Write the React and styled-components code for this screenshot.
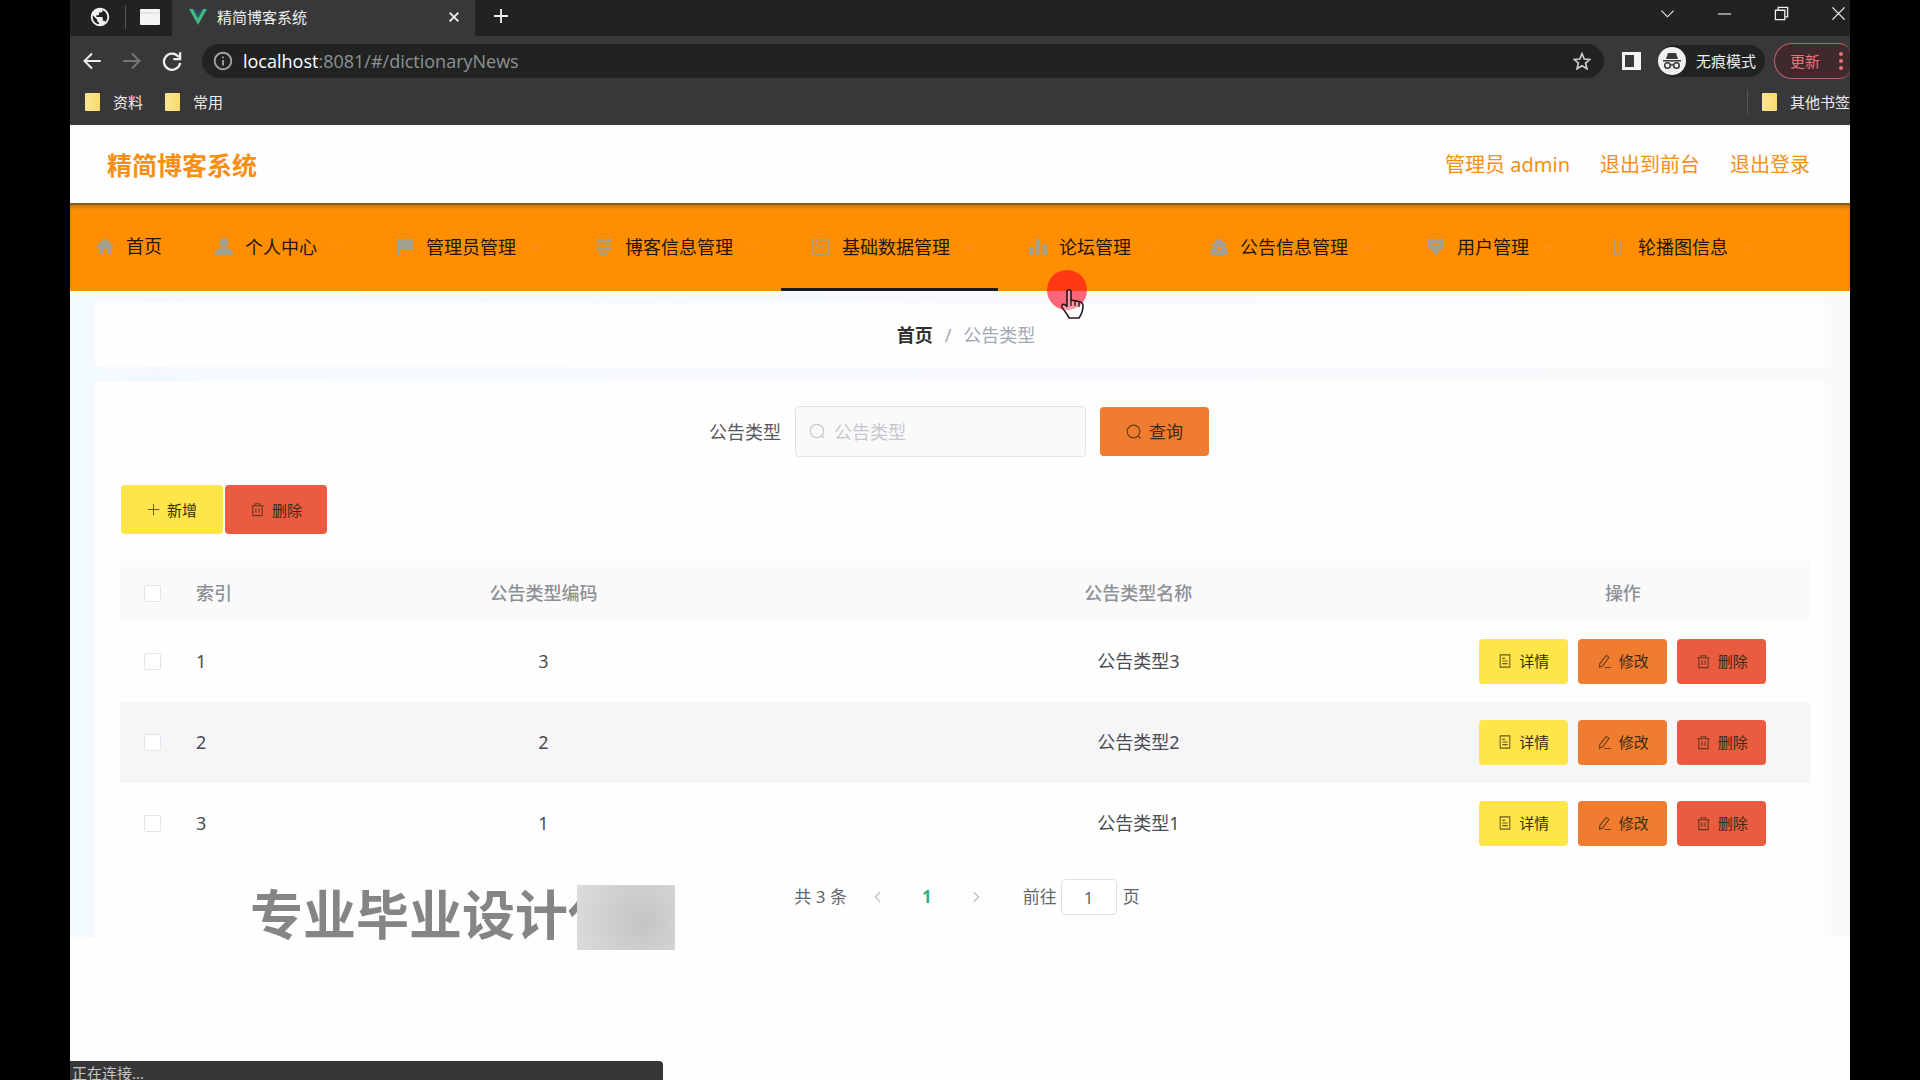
import styled, { createGlobalStyle, css } from 'styled-components'
import { MdPublic, MdInfoOutline } from 'react-icons/md'

const GlobalStyle = createGlobalStyle`
* {
  box-sizing: border-box;
}
body {
  margin: 0;
  background: #000;
  color: #303133;
  font-family: "Noto Sans", "Noto Sans CJK SC", sans-serif;
  font-size: 18px;
  line-height: 24px;
}
button, input {
  font: inherit;
  color: inherit;
}
button {
  border: none;
  padding: 0;
  background: none;
  cursor: pointer;
}
a {
  color: inherit;
  text-decoration: none;
}
`
const Screen = styled.div`
  position: relative;
  display: flex;
  flex-direction: column;
  min-height: 100vh;
  margin: 0 70px;
  overflow: hidden;
  background: #fefefe;
`

/* browser chrome */
const TabStrip = styled.div`
  display: flex;
  height: 36px;
  background: #202322;
`
const PinnedTabs = styled.div`
  display: flex;
  align-items: center;
  gap: 14px;
  width: 102px;
  padding: 0 0 3px 19px;
`
const Divider = styled.span`
  width: 1px;
  height: 24px;
  background: #55585a;
`
const Tab = styled.div`
  display: flex;
  align-items: center;
  gap: 10px;
  width: 303px;
  padding: 0 14px 2px 17px;
  background: #38383a;
  color: #eee;
  font-size: 15px;
`
const TabTitle = styled.span`
  flex: 1;
`
const IconButton = styled.button`
  display: flex;
  align-items: center;
  justify-content: center;
  color: ${({ $color }) => $color || '#eee'};
`
const NewTab = styled(IconButton)`
  width: 52px;
  height: 32px;
`
const WindowButtons = styled.div`
  display: flex;
  align-items: center;
  gap: 42px;
  height: 26px;
  margin-left: auto;
  padding-right: 4px;
`
const Toolbar = styled.div`
  display: flex;
  align-items: center;
  height: 50px;
  padding-left: 12px;
  background: #38383a;
`
const NavButtons = styled.div`
  display: flex;
  gap: 20px;
  width: 120px;
`
const AddressBar = styled.div`
  display: flex;
  flex: 1;
  align-items: center;
  gap: 9px;
  height: 34px;
  padding: 0 13px 0 10px;
  border-radius: 17px;
  background: #202322;
  color: #a2a4a5;
`
const Url = styled.span`
  flex: 1;
  color: #8f9192;
  font-family: "Open Sans", sans-serif;
`
const Host = styled.span`
  color: #fff;
`
const ToolbarEnd = styled.div`
  display: flex;
  align-items: center;
  padding-left: 18px;
`
const Incognito = styled.div`
  display: flex;
  align-items: center;
  gap: 10px;
  height: 32px;
  margin: 0 9px 0 17px;
  padding-right: 9px;
  border-radius: 16px;
  background: #202322;
  color: #eee;
  font-size: 15px;
`
const Update = styled.button`
  display: flex;
  align-items: center;
  justify-content: space-between;
  width: 76px;
  height: 36px;
  padding: 0 7px 0 15px;
  border: 1px solid #c0606c;
  border-right: none;
  border-radius: 18px 10px 10px 18px;
  background: #40292c;
  color: #e8717c;
  font-size: 15px;
`
const Bookmarks = styled.div`
  display: flex;
  align-items: center;
  gap: 22px;
  height: 39px;
  padding: 0 0 8px 15px;
  background: #38373a;
  color: #eee;
  font-size: 15px;
`
const Bookmark = styled.a`
  display: flex;
  align-items: center;
  gap: 13px;
`
const OtherBookmarks = styled.div`
  display: flex;
  align-items: center;
  gap: 14px;
  margin-left: auto;
`
const Folder = styled.span`
  width: 15px;
  height: 18px;
  border-radius: 1px;
  background: linear-gradient(90deg, #fbe594, #fadb6c);
`

/* admin page */
const Header = styled.header`
  display: flex;
  align-items: center;
  justify-content: space-between;
  height: 78px;
  padding: 2px 40px 0 37px;
  background: #fefdff;
  color: #f68f14;
`
const Brand = styled.h1`
  margin: 0;
  font-size: 25px;
  font-weight: 700;
  line-height: 36px;
`
const Account = styled.div`
  display: flex;
  gap: 30px;
  font-size: 20px;
`
const Menu = styled.nav`
  display: flex;
  height: 88px;
  background: #ff8f00;
  box-shadow: inset 0 2px 1px #8a5a12, inset 0 6px 5px -2px #c07a18;
  color: #241503;
  white-space: nowrap;
`
const MenuItem = styled.a`
  display: flex;
  align-items: center;
  gap: 12px;
  padding: ${({ $plain }) => ($plain ? '0 22px 0 26px' : '2px 22px 0 31px')};
  border-bottom: 3px solid ${({ $active }) => ($active ? '#1b1b22' : 'transparent')};

  svg {
    flex: none;
  }
`
const Caret = styled.svg`
  color: #f4964a;
`
const Main = styled.main`
  display: flex;
  flex-direction: column;
  gap: 14px;
  padding: 12px 25px 0;
  background: linear-gradient(90deg, #f2f9ff, #f6f9fd 30%, #fafafc);
`
const Panel = styled.section`
  border-radius: 4px;
  background: #fefefe;
`
const Breadcrumb = styled(Panel)`
  display: flex;
  align-items: center;
  justify-content: center;
  gap: 12px;
  height: 64px;
  padding-left: 12px;
  color: #a3a8b2;
`
const Current = styled.a`
  color: #303133;
  font-weight: 700;
`
const Content = styled(Panel)`
  padding: 25px 15px 22px 25px;
`
const SearchForm = styled.form`
  display: flex;
  align-items: center;
  justify-content: center;
  gap: 14px;
  padding-right: 12px;
  color: #55585d;
`
const SearchField = styled.div`
  display: flex;
  align-items: center;
  gap: 8px;
  width: 291px;
  height: 51px;
  padding: 0 13px;
  border: 1px solid #e2e2e4;
  border-radius: 4px;
  background: #fafafa;
  color: #c6c8cc;

  input {
    flex: 1;
    min-width: 0;
    padding: 0;
    border: none;
    outline: none;
    background: none;
  }
  input::placeholder {
    color: #c6c8cc;
    opacity: 1;
  }
`
const tones = {
  yellow: '#fde54a',
  orange: '#f07c30',
  red: '#e95c40',
}
const Button = styled.button`
  display: flex;
  align-items: center;
  justify-content: center;
  gap: 7px;
  width: 102px;
  height: 49px;
  border-radius: 4px;
  background: ${({ $tone }) => tones[$tone]};
  color: #3b2b12;
  font-size: 15px;

  svg {
    opacity: .75;
  }
  ${({ $size }) => $size === 'large' && css`
    width: 109px;
    font-size: 17px;
  `}
  ${({ $size }) => $size === 'small' && css`
    width: 89px;
    height: 45px;
  `}
`
const Actions = styled.div`
  display: flex;
  gap: 2px;
  margin: 28px 1px 27px;
`
const Table = styled.table`
  width: 100%;
  border-collapse: collapse;
  table-layout: fixed;
  color: #4a4c52;

  th, td {
    padding: 0;
    text-align: center;
  }
  th {
    height: 60px;
    padding-top: 4px;
    background: #fafafb;
    color: #8d9096;
    font-weight: 500;
  }
  td {
    height: 81px;
    padding-bottom: 1px;
  }
  tbody tr:nth-child(even) {
    background: #f6f6f9;
  }
  th:nth-child(2), td:nth-child(2) {
    text-align: left;
  }
`
const Col = styled.col`
  width: ${({ $width }) => $width};
`
const Check = styled.input`
  appearance: none;
  display: block;
  width: 17px;
  height: 17px;
  margin: 0 0 0 24px;
  border: 1px solid #e4e5ea;
  border-radius: 2px;
  background: #fff;
`
const RowActions = styled.div`
  display: flex;
  justify-content: center;
  gap: 10px;
`
const Pagination = styled.div`
  display: flex;
  align-items: center;
  justify-content: center;
  margin-top: 15px;
  padding-left: 4px;
  color: #63666c;
  font-size: 17px;

  input {
    width: 56px;
    height: 36px;
    margin: 0 6px 0 4px;
    padding: 0;
    border: 1px solid #dcdfe6;
    border-radius: 4px;
    background: #fff;
    text-align: center;
  }
`
const Pager = styled.div`
  display: flex;
  align-items: center;
  gap: 37px;
  margin: 0 40px 0 24px;
`
const PageNumber = styled.button`
  color: #35b07c;
  font-weight: 700;
`

/* things floating over the page */
const Watermark = styled.div`
  position: absolute;
  top: 879px;
  left: 180px;
  color: #858585;
  font-size: 53px;
  font-weight: 700;
  line-height: 72px;
  white-space: nowrap;
`
const Mosaic = styled.span`
  position: absolute;
  top: 6px;
  left: 327px;
  width: 98px;
  height: 65px;
  background: radial-gradient(circle at 65% 55%, #c4c3c6, #cfced1 45%, #dddcde);
`
const Pointer = styled.svg`
  position: absolute;
  top: 266px;
  left: 974px;
`
const Status = styled.div`
  position: absolute;
  bottom: 0;
  left: 0;
  width: 593px;
  height: 19px;
  padding: 2px 2px 0;
  border-radius: 0 4px 0 0;
  background: #363638;
  color: #c4c4c6;
  font-size: 15px;
  line-height: 20px;
`

const Line = ({ size = 16, width = 1.2, box = 16, children }) => (
  <svg width={size} height={size} viewBox={`0 0 ${box} ${box}`} fill="none" stroke="currentColor" strokeWidth={width} aria-hidden="true">
    {children}
  </svg>
)
const Plus = () => <Line size={13}><path d="M8 1v14M1 8h14" /></Line>
const SearchIcon = ({ size }) => <Line size={size}><circle cx="7.5" cy="7.5" r="6.3" /><path d="M12.2 12.2l2.3 2.3" /></Line>
const Trash = () => <Line size={15}><path d="M1.5 4h13M5.5 4V1.8h5V4M3 4v10.5h10V4M6.3 7v4.5M9.7 7v4.5" /></Line>
const Doc = () => <Line size={14}><path d="M2.5 1h11v14h-11zM5 5h3M5 8h6M5 11h6" /></Line>
const Edit = () => <Line size={15}><path d="M9.8 1.5l3 2-6.6 9-3.6 1.6.4-3.9zM8 14.4h7" /></Line>
const Arrow = ({ left }) => <Line size={14} width={1.6}><path d={left ? 'M10.5 2.5L5 8l5.5 5.5' : 'M5.5 2.5L11 8l-5.5 5.5'} /></Line>

const menuIcons = {
  home: <path d="M9 1L0 9.5 1.5 11 3 9.8V17h4v-5h4v5h4V9.800l1.500 1.200L18 9.500z" />,
  user: <path d="M9 0a4.500 4.500 0 0 1 2.500 8.200V10c4 .8 6.500 2.500 6.500 5v2H0v-2c0-2.500 2.500-4.200 6.500-5V8.200A4.500 4.500 0 0 1 9 0z" />,
  flag: <path d="M1 1h16v11H4v6H1z" />,
  order: <path d="M2 1h14v3.500H2zM2 6.500h4V8H2zM8 6.500h8V8H8zM2 10h14v2.500H2zM4 14.500h9V17H4z" />,
  mail: <path d="M1 2h16v14H1zM4 6l5 4 5-4" fill="none" stroke="currentColor" strokeWidth="1.500" />,
  chart: <path d="M0 9h4v8H0zM6.500 1H11v16H6.500zM13.500 6H18v11h-4.500z" />,
  goods: <path d="M5 5a4 4 0 0 1 8 0h3v4H2V5zM1 10h6v2h4v-2h6l1 7H0z" />,
  bulb: <path d="M1 1h16v9l-4 2-4 6-4-6-4-2zM5 5v1.500h8V5z" fillRule="evenodd" />,
  clip: <path d="M6 1v13a3 3 0 0 0 6 0V3" fill="none" stroke="currentColor" strokeWidth="1.500" />,
}
const MenuIcon = ({ name }) => (
  <svg width="18" height="18" viewBox="0 0 18 18" fill="#a3a08e" color="#a3a08e" aria-hidden="true">{menuIcons[name]}</svg>
)

const menu = [
  ['home', '首页'],
  ['user', '个人中心'],
  ['flag', '管理员管理'],
  ['order', '博客信息管理'],
  ['mail', '基础数据管理'],
  ['chart', '论坛管理'],
  ['goods', '公告信息管理'],
  ['bulb', '用户管理'],
  ['clip', '轮播图信息'],
]

const rows = [
  { id: 1, code: 3, name: '公告类型3' },
  { id: 2, code: 2, name: '公告类型2' },
  { id: 3, code: 1, name: '公告类型1' },
]

const BrowserChrome = () => (
  <>
    <TabStrip>
      <PinnedTabs>
        <MdPublic size={22} color="#f1f1f1" />
        <Divider />
        <svg width="20" height="16" viewBox="0 0 20 16" aria-hidden="true"><rect width="20" height="16" rx="1" fill="#f4f4f4" /><path d="M0 4h20" stroke="#d5d5d5" /></svg>
      </PinnedTabs>
      <Tab>
        <svg width="18" height="16" viewBox="0 0 18 16" aria-hidden="true"><path d="M0 0h4l5 9 5-9h4L9 16z" fill="#41b883" /><path d="M4 0h3l2 4 2-4h3L9 9z" fill="#35495e" /></svg>
        <TabTitle>精简博客系统</TabTitle>
        <IconButton aria-label="关闭标签页"><Line size={14} width={2.2}><path d="M3 3l10 10M13 3L3 13" /></Line></IconButton>
      </Tab>
      <NewTab aria-label="新标签页"><Line size={16} width={1.8}><path d="M8 1v14M1 8h14" /></Line></NewTab>
      <WindowButtons>
        <IconButton aria-label="搜索标签页"><Line size={15}><path d="M1.500 5L8 11.500 14.500 5" /></Line></IconButton>
        <IconButton aria-label="最小化"><Line size={15}><path d="M1 8.500h14" /></Line></IconButton>
        <IconButton aria-label="还原"><Line size={15} width={1.4}><path d="M1.500 4.500h10v10h-10zM4.500 4.500v-3h10v10h-3" /></Line></IconButton>
        <IconButton aria-label="关闭"><Line size={15} width={1.4}><path d="M1.500 1.500l13 13M14.500 1.500l-13 13" /></Line></IconButton>
      </WindowButtons>
    </TabStrip>
    <Toolbar>
      <NavButtons>
        <IconButton aria-label="后退"><Line size={20} width={1.6}><path d="M15 8H2M8 2L2 8l6 6" /></Line></IconButton>
        <IconButton aria-label="前进" $color="#77777a"><Line size={20} width={1.6}><path d="M1 8h13M8 2l6 6-6 6" /></Line></IconButton>
        <IconButton aria-label="重新加载"><Line size={20} width={1.8}><path d="M13.500 5A6.500 6.500 0 1 0 14.500 9.500M14.500 1v5.500H9" /></Line></IconButton>
      </NavButtons>
      <AddressBar>
        <MdInfoOutline size={22} />
        <Url><Host>localhost</Host>:8081/#/dictionaryNews</Url>
        <IconButton aria-label="收藏" $color="#ccc"><Line size={18} width={1.5}><path d="M8 1.500l2 4.700 5 .4-3.800 3.300 1.200 5L8 12.200l-4.400 2.700 1.200-5L1 6.600l5-.4z" /></Line></IconButton>
      </AddressBar>
      <ToolbarEnd>
        <IconButton aria-label="侧边栏">
          <svg width="19" height="18" viewBox="0 0 19 18" aria-hidden="true"><path d="M0 0h19v18H0z" fill="#f4f4f4" /><path d="M3 3h9v12H3z" fill="#38383a" /></svg>
        </IconButton>
        <Incognito>
          <svg width="28" height="28" viewBox="0 0 28 28" aria-hidden="true">
            <circle cx="14" cy="14" r="14" fill="#f1f1f1" />
            <path d="M10 6h8l2 6H8zM5 13h18v1.500H5z" fill="#38383a" />
            <g fill="none" stroke="#38383a" strokeWidth="1.500"><circle cx="9.500" cy="18.500" r="2.800" /><circle cx="18.500" cy="18.500" r="2.800" /><path d="M12.300 18h3.400" /></g>
          </svg>
          无痕模式
        </Incognito>
        <Update>
          更新
          <svg width="4" height="18" viewBox="0 0 4 18" fill="currentColor" aria-hidden="true"><circle cx="2" cy="2" r="2" /><circle cx="2" cy="9" r="2" /><circle cx="2" cy="16" r="2" /></svg>
        </Update>
      </ToolbarEnd>
    </Toolbar>
    <Bookmarks>
      <Bookmark href="#"><Folder />资料</Bookmark>
      <Bookmark href="#"><Folder />常用</Bookmark>
      <OtherBookmarks>
        <Divider />
        <Bookmark href="#"><Folder />其他书签</Bookmark>
      </OtherBookmarks>
    </Bookmarks>
  </>
)

const NoticeTable = () => (
  <Table>
    <colgroup>
      <Col $width="76px" />
      <Col $width="50px" />
      <Col $width="35.2%" />
      <Col $width="35.2%" />
      <Col />
    </colgroup>
    <thead>
      <tr>
        <th><Check type="checkbox" aria-label="全选" /></th>
        <th>索引</th>
        <th>公告类型编码</th>
        <th>公告类型名称</th>
        <th>操作</th>
      </tr>
    </thead>
    <tbody>
      {rows.map((row) => (
        <tr key={row.id}>
          <td><Check type="checkbox" aria-label={row.name} /></td>
          <td>{row.id}</td>
          <td>{row.code}</td>
          <td>{row.name}</td>
          <td>
            <RowActions>
              <Button $size="small" $tone="yellow"><Doc />详情</Button>
              <Button $size="small" $tone="orange"><Edit />修改</Button>
              <Button $size="small" $tone="red"><Trash />删除</Button>
            </RowActions>
          </td>
        </tr>
      ))}
    </tbody>
  </Table>
)

const App = () => {
  return (
    <>
      <GlobalStyle />
      <Screen>
        <BrowserChrome />
        <Header>
          <Brand>精简博客系统</Brand>
          <Account>
            <span>管理员 admin</span>
            <a href="#">退出到前台</a>
            <a href="#">退出登录</a>
          </Account>
        </Header>
        <Menu>
          {menu.map(([icon, label]) => (
            <MenuItem key={icon} href="#" $plain={icon === 'home'} $active={icon === 'mail'}>
              <MenuIcon name={icon} />
              {label}
              {icon !== 'home' && (
                <Caret width="14" height="14" viewBox="0 0 14 14" fill="none" stroke="currentColor"><path d="M3 5l4 4 4-4" /></Caret>
              )}
            </MenuItem>
          ))}
        </Menu>
        <Main>
          <Breadcrumb>
            <Current href="#">首页</Current>
            <span>/</span>
            <span>公告类型</span>
          </Breadcrumb>
          <Content>
            <SearchForm onSubmit={(e) => e.preventDefault()}>
              <label htmlFor="type">公告类型</label>
              <SearchField>
                <SearchIcon size={17} />
                <input id="type" placeholder="公告类型" />
              </SearchField>
              <Button $size="large" $tone="orange"><SearchIcon size={16} />查询</Button>
            </SearchForm>
            <Actions>
              <Button $tone="yellow"><Plus />新增</Button>
              <Button $tone="red"><Trash />删除</Button>
            </Actions>
            <NoticeTable />
            <Pagination>
              <span>共 3 条</span>
              <Pager>
                <IconButton aria-label="上一页" $color="#c0c4cc"><Arrow left /></IconButton>
                <PageNumber>1</PageNumber>
                <IconButton aria-label="下一页" $color="#c0c4cc"><Arrow /></IconButton>
              </Pager>
              <label htmlFor="page">前往</label>
              <input id="page" defaultValue="1" />
              <span>页</span>
            </Pagination>
          </Content>
        </Main>
        <Watermark>
          专业毕业设计代
          <Mosaic />
        </Watermark>
        <Pointer width="50" height="56" viewBox="0 0 50 56" aria-hidden="true">
          <circle cx="23" cy="24" r="20" fill="#ff0020" fillOpacity=".6" />
          <path d="M23 26c0-3 4-3 4 0v8l8 1.500c3 .6 4 2 4 4.500 0 6-2 9-4 12H25c-2-5-5-7-7-11-1-3 3-4 5 0z" fill="#fff" fillOpacity=".35" stroke="#2b1820" strokeWidth="1.600" />
          <path d="M27 34v6M31 35v5M35 36v5" stroke="#2b1820" strokeWidth="1.400" />
        </Pointer>
        <Status>正在连接...</Status>
      </Screen>
    </>
  )
}

export default App
